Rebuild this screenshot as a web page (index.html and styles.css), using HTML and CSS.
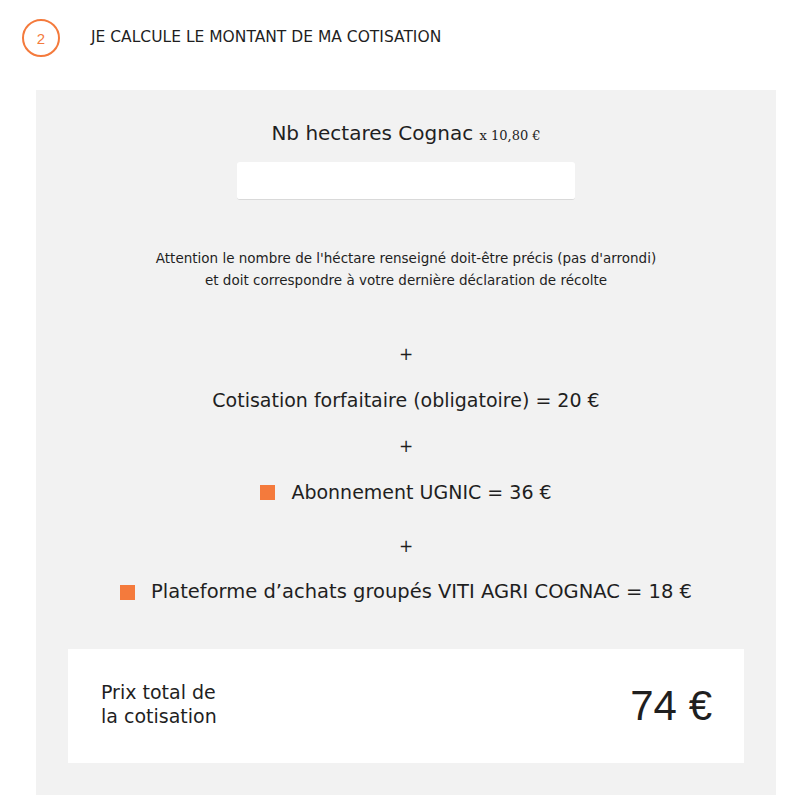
FILE: index.html
```html
<!DOCTYPE html>
<html lang="fr">
<head>
<meta charset="utf-8">
<title>Cotisation</title>
<link rel="stylesheet" href="styles.css">
</head>
<body>
<div class="step">
  <span class="step-num">2</span>
  <h2 class="step-title">JE CALCULE LE MONTANT DE MA COTISATION</h2>
</div>
<div class="panel">
  <div class="field-label">Nb hectares Cognac <span class="rate">x 10,80 €</span></div>
  <input class="field-input" type="text">
  <p class="notice">Attention le nombre de l'héctare renseigné doit-être précis (pas d'arrondi)<br>et doit correspondre à votre dernière déclaration de récolte</p>
  <div class="plus plus-first">+</div>
  <div class="line line-fixed">Cotisation forfaitaire (obligatoire) = 20 €</div>
  <div class="plus">+</div>
  <div class="line line-opt"><span class="box"></span>Abonnement UGNIC = 36 €</div>
  <div class="plus plus-third">+</div>
  <div class="line line-opt line-wide"><span class="box"></span>Plateforme d’achats groupés VITI AGRI COGNAC = 18 €</div>
  <div class="total">
    <div class="total-label">Prix total de<br>la cotisation</div>
    <div class="total-value">74 €</div>
  </div>
</div>
</body>
</html>
```
FILE: styles.css
```css
html, body {
  margin: 0;
  padding: 0;
  background: #fff;
}
body {
  font-family: "DejaVu Sans", "Open Sans", sans-serif;
  color: #1f1f1f;
}
.step {
  display: flex;
  align-items: center;
  height: 80px;
  padding-left: 22px;
  box-sizing: border-box;
  padding-bottom: 4px;
}
.step-num {
  width: 38px;
  height: 38px;
  border: 2px solid #f47a3c;
  border-radius: 50%;
  box-sizing: border-box;
  display: flex;
  align-items: center;
  justify-content: center;
  color: #f47a3c;
  font-family: "Liberation Sans", sans-serif;
  font-size: 15px;
}
.step-title {
  margin: -2px 0 0 31px;
  font-size: 15.5px;
  font-weight: 400;
  letter-spacing: 0;
}
.panel {
  margin: 10px 0 0 36px;
  width: 740px;
  background: #f2f2f2;
  padding: 31px 32px 32px;
  box-sizing: border-box;
  display: flex;
  flex-direction: column;
  align-items: center;
}
.field-label {
  font-size: 20px;
  line-height: 24px;
  height: 24px;
}
.rate {
  font-family: "DejaVu Serif", "Liberation Serif", serif;
  font-size: 13px;
  line-height: 1;
}
.field-input {
  display: block;
  margin: 17px 0 0;
  padding: 0;
  width: 338px;
  height: 38px;
  box-sizing: border-box;
  border: none;
  border-bottom: 1px solid #d9d9d9;
  border-radius: 3px;
  background: #fff;
}
.notice {
  margin: 47px 0 0;
  font-size: 13.5px;
  line-height: 22px;
  text-align: center;
}
.plus {
  font-size: 17px;
  line-height: 24px;
  margin-top: 22px;
}
.plus-first {
  margin-top: 51px;
}
.plus-third {
  margin-top: 30px;
}
.line {
  font-size: 19px;
  line-height: 24px;
  margin-top: 22px;
  display: flex;
  align-items: center;
}
.line-opt:nth-of-type(1) {
  margin-top: 23px;
}
.line-wide {
  font-size: 19.5px;
}
.box {
  width: 15px;
  height: 15px;
  background: #f47a3c;
  margin-right: 16px;
}
.total {
  margin-top: 45px;
  align-self: stretch;
  height: 114px;
  background: #fff;
  display: flex;
  align-items: center;
  justify-content: space-between;
  padding: 0 32px 0 33px;
  box-sizing: border-box;
}
.total-label {
  font-size: 19px;
  line-height: 24px;
  margin-top: -5px;
}
.total-value {
  font-family: "Liberation Sans", Arial, sans-serif;
  font-size: 42px;
  line-height: 50px;
}
```
